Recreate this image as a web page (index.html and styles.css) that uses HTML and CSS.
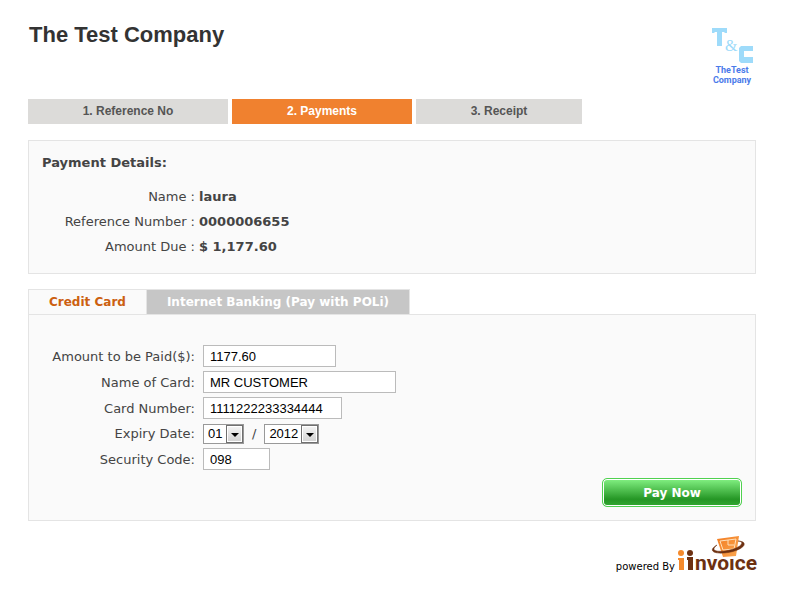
FILE: index.html
```html
<!DOCTYPE html>
<html lang="en">
<head>
<meta charset="utf-8">
<title>The Test Company</title>
<link rel="stylesheet" href="styles.css">
</head>
<body>
<header class="header">
  <h1>The Test Company</h1>
  <div class="brand">
    <svg width="42" height="37" viewBox="0 0 42 37" aria-hidden="true">
      <g fill="#9edbfa">
        <path d="M0 0h15v5h-2l-1-1h-2v14h-5V4H3L2 5H0z"/>
        <path d="M41 18v5h-9v6h9v6H29l-2-2V20l2-2z"/>
        <text class="amp" x="13" y="23">&amp;</text>
      </g>
    </svg>
    <span>TheTest<br>Company</span>
  </div>
</header>
<ol class="steps">
  <li class="step-ref">1. Reference No</li>
  <li class="step-pay" aria-current="step">2. Payments</li>
  <li class="step-receipt">3. Receipt</li>
</ol>
<section class="panel details">
  <h2>Payment Details:</h2>
  <dl>
    <dt>Name :</dt><dd>laura</dd>
    <dt>Reference Number :</dt><dd>0000006655</dd>
    <dt>Amount Due :</dt><dd>$ 1,177.60</dd>
  </dl>
</section>
<nav class="tabs">
  <a class="active" href="#card">Credit Card</a>
  <a href="#poli">Internet Banking (Pay with POLi)</a>
</nav>
<form class="panel payment" id="card">
  <div class="fields">
    <label for="amount">Amount to be Paid($):</label>
    <input class="amount" id="amount" type="text" value="1177.60">
    <label for="name">Name of Card:</label>
    <input class="name" id="name" type="text" value="MR CUSTOMER">
    <label for="number">Card Number:</label>
    <input class="number" id="number" type="text" value="1111222233334444">
    <label for="month">Expiry Date:</label>
    <div class="expiry">
      <span class="drop month"><select id="month"><option>01</option></select></span>
      <span>/</span>
      <span class="drop year"><select aria-label="Expiry year"><option>2012</option></select></span>
    </div>
    <label for="code">Security Code:</label>
    <input class="code" id="code" type="text" value="098">
  </div>
  <button type="button">Pay Now</button>
</form>
<footer class="footer">
  <span>powered By</span>
  <svg width="82" height="38" viewBox="0 0 82 38" role="img" aria-label="iinvoice">
    <defs>
      <linearGradient id="orange" x1="0" y1="0" x2="1" y2="1">
        <stop offset="0" stop-color="#f27c22"/><stop offset="1" stop-color="#fba750"/>
      </linearGradient>
    </defs>
    <path d="M39 4L61 1L58 21L45 22z" fill="url(#orange)"/>
    <path d="M42 6L58 4L56 14L45 15zM50 5v5h6" fill="none" stroke="#ffe0bb"/>
    <circle cx="3" cy="18" r="3" fill="#f58a2c"/>
    <path d="M0 23h6v12H1V25H0z" fill="#f58a2c"/>
    <g fill="#6d3011">
      <circle cx="12" cy="18" r="3"/>
      <path d="M9 22h6v13h-5V25H9z"/>
      <text class="wordmark" x="17" y="35">nvoıce</text>
    </g>
    <path d="M39 10C30 15 35 19 46 18C59 17 70 11 65 7Q63 6 60 6C69 7 61 14 47 16C36 17 33 15 39 10z" fill="#6d3011" stroke="#6d3011" stroke-width=".5"/>
  </svg>
</footer>
</body>
</html>
```
FILE: styles.css
```css
* { box-sizing: border-box; }

body {
  margin: 0;
  padding: 22px 34px 24px 28px;
  background: #fff;
  color: #444;
  font: 13px/25px "DejaVu Sans", sans-serif;
}

h1, h2, ol, dl, dd { margin: 0; padding: 0; }

.header {
  display: flex;
  justify-content: space-between;
  height: 77px;
}

h1 {
  padding-left: 1px;
  color: #333;
  font: bold 22px/25px "Liberation Sans", sans-serif;
}

.brand {
  width: 48px;
  padding-top: 6px;
  color: #4b7bea;
  font: bold 9px/10px Roboto, sans-serif;
  text-align: center;
}

.brand svg { display: block; margin-left: 4px; }
.amp { font: 16px "Liberation Serif", serif; }

.steps {
  display: flex;
  gap: 4px;
  list-style: none;
  color: #555;
  font: bold 12px/25px "Liberation Sans", sans-serif;
  text-align: center;
}

.steps li { background: #dcdbd9; }
.step-ref { width: 200px; }
.steps .step-pay { width: 180px; background: #f0812f; color: #fff; }
.step-receipt { width: 166px; }

.panel {
  border: 1px solid #e4e4e4;
  background: #fafafa;
}

.details {
  margin: 16px 0 15px;
  padding: 9px 13px 14px;
}

h2 { margin-bottom: 9px; font-size: 13px; line-height: 25px; }

dl {
  display: grid;
  grid-template-columns: 153px 1fr;
  column-gap: 4px;
}

dt { text-align: right; }
dd { font-weight: bold; }

.tabs { display: flex; line-height: 24px; }

.tabs a {
  padding: 0 20px;
  border: 1px solid #e4e4e4;
  border-width: 1px 1px 0 0;
  background: #c6c6c6;
  color: #fff;
  font-size: 12px;
  font-weight: bold;
  text-decoration: none;
}

.tabs .active {
  border-left-width: 1px;
  background: #fafafa;
  color: #cc6010;
}

.payment { padding: 30px 13px 13px; }

.fields {
  display: grid;
  grid-template-columns: 153px 1fr;
  align-items: center;
  gap: 4px 8px;
  line-height: 21px;
}

.fields label { text-align: right; }

.fields input {
  height: 22px;
  padding: 0 6px;
  border: 1px solid #bbb;
  background: #fff;
  color: #000;
  font: 13px "Liberation Sans", sans-serif;
}

.amount { width: 133px; }
.name { width: 193px; }
.number { width: 139px; }
.code { width: 67px; }

.expiry { display: flex; gap: 8px; line-height: 20px; }
.drop { position: relative; height: 20px; }
.month { width: 41px; }
.year { width: 55px; }

.drop select {
  display: block;
  width: 100%;
  height: 20px;
  padding: 0 4px;
  appearance: none;
  border: 1px solid #999;
  border-radius: 0;
  background: #fff;
  color: #000;
  font: 13px "Liberation Sans", sans-serif;
}

.drop::before {
  content: "";
  position: absolute;
  box-sizing: border-box;
  top: 1px;
  right: 1px;
  width: 17px;
  height: 18px;
  border: 1px solid #707070;
  background: linear-gradient(#f4f4f4, #d2d2d2);
  box-shadow: inset 0 0 0 1px #fff;
  pointer-events: none;
}

.drop::after {
  content: "";
  position: absolute;
  top: 9px;
  right: 5px;
  border: 4px solid transparent;
  border-top-color: #000;
  border-bottom: 0;
  pointer-events: none;
}

.payment button {
  display: block;
  width: 140px;
  height: 29px;
  margin: 8px 0 0 auto;
  padding: 0;
  border: 1px solid #4fd14f;
  border-radius: 5px;
  background: linear-gradient(#83f183, #259625 75%, #32a832);
  box-shadow: inset 0 0 0 1px #fff;
  color: #fff;
  font: bold 12px "DejaVu Sans", sans-serif;
}

.footer {
  display: flex;
  justify-content: flex-end;
  gap: 3px;
  margin: 14px -4px 0 0;
  color: #000;
  font-size: 10px;
}

.footer span { padding-top: 19px; }
.footer svg { overflow: visible; }
.wordmark { font: bold 21px Roboto, sans-serif; }
```
